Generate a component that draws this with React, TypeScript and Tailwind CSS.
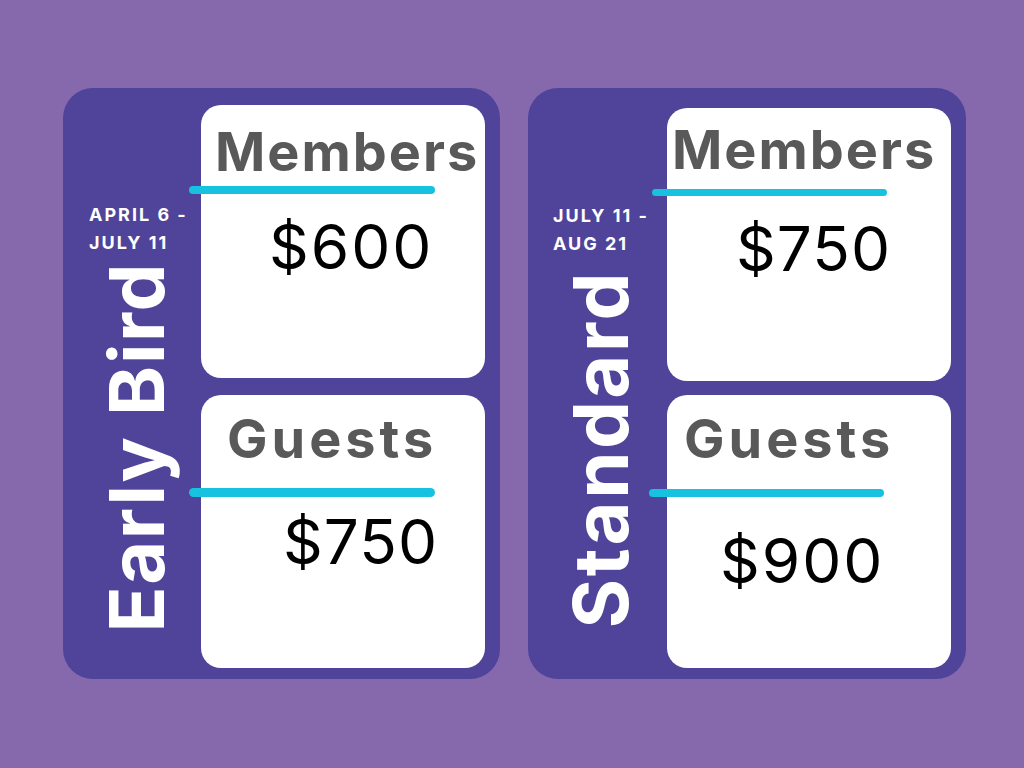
const font = { fontFamily: "Inter, 'Noto Sans', sans-serif" };

type CardProps = {
  title: string;
  price: string;
  cls: { card: string; title: string; line: string; price: string };
};

function PriceCard({ title, price, cls }: CardProps) {
  return (
    <div className={"flex h-[273px] w-[284px] flex-col rounded-[20px] bg-white " + cls.card}>
      <div className={"text-[54px] font-bold leading-none text-[#595959] " + cls.title}>{title}</div>
      <div className={"rounded-full bg-[#17c1e0] " + cls.line} />
      <div className={"text-[62px] font-normal leading-none text-black " + cls.price}>{price}</div>
    </div>
  );
}

type PanelProps = {
  label: string;
  dates: string[];
  cls: { panel: string; side: string; dates: string; label: string; cards: string };
  cards: CardProps[];
};

function Panel({ label, dates, cls, cards }: PanelProps) {
  return (
    <div className={"flex h-[591px] rounded-[30px] bg-[#4f4499] " + cls.panel}>
      <div className={"flex flex-col " + cls.side}>
        <div className={"text-[18px] font-bold leading-[28px] tracking-[2px] text-white " + cls.dates}>
          {dates.map((d) => (
            <div key={d}>{d}</div>
          ))}
        </div>
        <div
          className={
            "mt-auto rotate-180 whitespace-nowrap text-[76px] font-bold leading-none text-white [writing-mode:vertical-rl] " +
            cls.label
          }
        >
          {label}
        </div>
      </div>
      <div className={"flex flex-col " + cls.cards}>
        {cards.map((c) => (
          <PriceCard key={c.title} {...c} />
        ))}
      </div>
    </div>
  );
}

export default function App() {
  return (
    <div className="flex h-screen w-full gap-[28px] bg-[#8669ac] pl-[63px] pt-[88px]" style={font}>
      <Panel
        label="Early Bird"
        dates={["APRIL 6 -", "JULY 11"]}
        cls={{
          panel: "w-[437px]",
          side: "w-[138px] pl-[26px]",
          dates: "pt-[113px]",
          label: "mb-[47px] ml-[9px] tracking-[1.5px]",
          cards: "gap-[17px] pt-[17px]",
        }}
        cards={[
          {
            title: "Members",
            price: "$600",
            cls: {
              card: "",
              title: "pl-[14px] pt-[20px] tracking-[2px]",
              line: "-ml-[12px] mt-[7px] h-[8px] w-[246px]",
              price: "mt-[22px] pl-[68px] tracking-[2px]",
            },
          },
          {
            title: "Guests",
            price: "$750",
            cls: {
              card: "",
              title: "pl-[26px] pt-[17px] tracking-[4px]",
              line: "-ml-[12px] mt-[22px] h-[9px] w-[246px]",
              price: "mt-[14px] pl-[82px] tracking-[1px]",
            },
          },
        ]}
      />
      <Panel
        label="Standard"
        dates={["JULY 11 -", "AUG 21"]}
        cls={{
          panel: "w-[438px]",
          side: "w-[139px] pl-[25px]",
          dates: "pt-[114px]",
          label: "mb-[51px] ml-[9px] tracking-[2.5px]",
          cards: "gap-[14px] pt-[20px]",
        }}
        cards={[
          {
            title: "Members",
            price: "$750",
            cls: {
              card: "",
              title: "pl-[5px] pt-[15px] tracking-[2px]",
              line: "-ml-[15px] mt-[12px] h-[7px] w-[235px]",
              price: "mt-[22px] pl-[69px] tracking-[1px]",
            },
          },
          {
            title: "Guests",
            price: "$900",
            cls: {
              card: "",
              title: "pl-[17px] pt-[17px] tracking-[4px]",
              line: "-ml-[18px] mt-[23px] h-[8px] w-[235px]",
              price: "mt-[33px] pl-[53px] tracking-[2px]",
            },
          },
        ]}
      />
    </div>
  );
}
